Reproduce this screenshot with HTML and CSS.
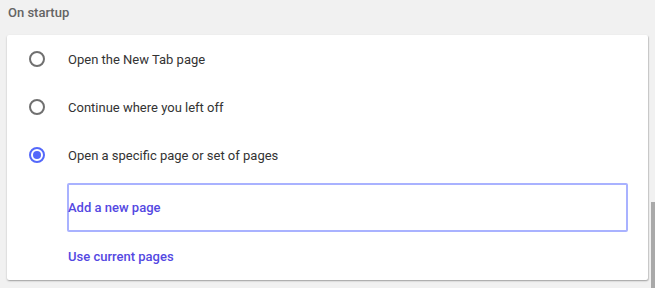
FILE: index.html
```html
<!DOCTYPE html>
<html>
<head>
<meta charset="utf-8">
<link rel="stylesheet" href="styles.css">
</head>
<body>
<div class="page">
  <div class="heading">On startup</div>
  <div class="card">
    <div class="row">
      <span class="radio"></span>
      <span class="label">Open the New Tab page</span>
    </div>
    <div class="row">
      <span class="radio"></span>
      <span class="label">Continue where you left off</span>
    </div>
    <div class="row">
      <span class="radio checked"></span>
      <span class="label">Open a specific page or set of pages</span>
    </div>
    <div class="sub">
      <div class="addbox"><span class="link">Add a new page</span></div>
      <div class="userow"><span class="link">Use current pages</span></div>
    </div>
  </div>
</div>
<div class="thumb"></div>
</body>
</html>
```
FILE: styles.css
```css
html, body {
  margin: 0;
  padding: 0;
  background: #f1f1f1;
  font-family: Roboto, "Liberation Sans", sans-serif;
  overflow: hidden;
}
.page {
  width: 655px;
  height: 288px;
}
.heading {
  height: 35px;
  box-sizing: border-box;
  padding: 4px 0 0 8px;
  font-size: 13px;
  font-weight: 500;
  color: #646464;
  line-height: 18px;
}
.card {
  margin-left: 7px;
  width: 641px;
  height: 245px;
  background: #fff;
  border-radius: 2px;
  box-shadow: 0 1px 2px rgba(0,0,0,0.25), 1px 1px 1px rgba(0,0,0,0.12);
}
.row {
  height: 48px;
  display: flex;
  align-items: center;
  padding-left: 22px;
}
.radio {
  width: 16px;
  height: 16px;
  box-sizing: border-box;
  border: 2px solid #707070;
  border-radius: 50%;
  display: flex;
  align-items: center;
  justify-content: center;
  margin-right: 23px;
}
.radio.checked {
  border-color: #5468fa;
}
.radio.checked::after {
  content: "";
  width: 8px;
  height: 8px;
  border-radius: 50%;
  background: #5468fa;
}
.label {
  font-size: 13px;
  color: #333;
}
.sub {
  padding: 4px 20px 0 60px;
}
.addbox {
  height: 49px;
  box-sizing: border-box;
  border: 2px solid #a9b2ff;
  border-radius: 2px;
  display: flex;
  align-items: center;
}
.addbox .link {
  margin-left: -1px;
}
.link {
  font-size: 13px;
  font-weight: 500;
  color: #5448e2;
}
.userow {
  height: 48px;
  display: flex;
  align-items: center;
  padding-left: 1px;
}
.thumb {
  position: fixed;
  left: 651px;
  top: 202px;
  width: 4px;
  height: 86px;
  background: #a9a9a9;
}
```
